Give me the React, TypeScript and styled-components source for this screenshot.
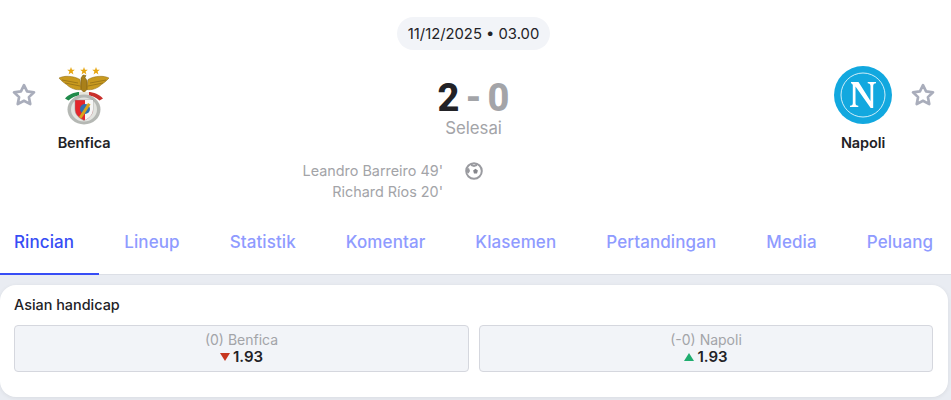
import styled, { createGlobalStyle } from 'styled-components';

const GlobalStyle = createGlobalStyle`
  html, body {
    margin: 0;
    padding: 0;
    background: #e9ecf2;
    font-family: Inter, "Liberation Sans", sans-serif;
  }
  * {
    box-sizing: border-box;
  }
`;

const Page = styled.div`
  width: 951px;
  height: 400px;
  overflow: hidden;
`;

const Header = styled.div`
  height: 215px;
  background: #fff;
  padding: 17px 4px 0 0;
`;

const DatePill = styled.div`
  width: 153px;
  height: 33px;
  margin: 0 auto;
  border-radius: 17px;
  background: #f2f4f8;
  color: #222226;
  font-size: 14.8px;
  display: flex;
  align-items: center;
  justify-content: center;
`;

const MatchRow = styled.div`
  display: grid;
  grid-template-columns: 130px 1fr 130px;
  margin-top: 15px;
  height: 95px;
`;

const TeamSide = styled.div<{ $flip?: boolean }>`
  display: flex;
  flex-direction: ${(p) => (p.$flip ? 'row-reverse' : 'row')};
  align-items: flex-start;
  padding: ${(p) => (p.$flip ? '0 8px 0 0' : '0 0 0 8px')};
`;

const FavStar = styled.svg`
  width: 32px;
  height: 32px;
  margin-top: 14px;
  flex: none;
  fill: none;
  stroke: #a9adbb;
  stroke-width: 2;
  stroke-linejoin: round;
`;

const Team = styled.div`
  width: 60px;
  margin: 0 14px;
  display: flex;
  flex-direction: column;
  align-items: center;
`;

const Crest = styled.svg`
  width: 60px;
  height: 60px;
  display: block;
  flex: none;
`;

const TeamName = styled.div`
  margin-top: 9px;
  font-size: 14.5px;
  line-height: 18px;
  font-weight: 600;
  color: #222226;
  letter-spacing: -0.1px;
`;

const Center = styled.div`
  display: flex;
  flex-direction: column;
  align-items: center;
  padding-top: 14px;
`;

const Score = styled.div`
  display: flex;
  align-items: center;
  gap: 6px;
  height: 38px;
  font-family: Roboto, Inter, sans-serif;
  font-size: 38px;
  font-weight: 800;
  line-height: 38px;
`;

const ScoreValue = styled.span<{ $muted?: boolean }>`
  color: ${(p) => (p.$muted ? '#a3a4a8' : '#222226')};
`;

const Status = styled.div`
  margin-top: 1px;
  font-size: 16.8px;
  line-height: 20px;
  color: #a3a4a8;
`;

const Scorers = styled.div`
  display: grid;
  grid-template-columns: 1fr 61px 1fr;
`;

const ScorerList = styled.div`
  text-align: right;
  white-space: nowrap;
  font-size: 14.4px;
  line-height: 21px;
  color: #a3a4a8;
`;

const BallIcon = styled.svg`
  width: 18px;
  height: 18px;
  margin: 1.5px auto 0;
  display: block;
`;

const Tabs = styled.div`
  height: 60px;
  background: #fff;
  border-bottom: 1px solid #dcdfe6;
  display: flex;
  align-items: stretch;
`;

const Tab = styled.div<{ $active?: boolean }>`
  flex: none;
  height: 60px;
  padding: 17px 25px 0;
  font-size: 17px;
  line-height: 20px;
  font-weight: 500;
  letter-spacing: 0.1px;
  white-space: nowrap;
  color: ${(p) => (p.$active ? '#374df5' : '#8f9bff')};
  border-bottom: 2px solid ${(p) => (p.$active ? '#374df5' : 'transparent')};

  &:first-child {
    padding-left: 14px;
  }
`;

const Body = styled.div`
  padding: 10px 3px 0 0;
`;

const Card = styled.div`
  height: 112px;
  background: #fff;
  border-radius: 16px;
  padding: 11px 14px 0;
  box-shadow: 0 1px 4px rgba(34, 34, 38, 0.08);
`;

const CardTitle = styled.div`
  font-size: 14.4px;
  line-height: 18px;
  font-weight: 500;
  color: #222226;
`;

const Odds = styled.div`
  display: grid;
  grid-template-columns: 455px 454px;
  gap: 10px;
  margin-top: 11px;
`;

const OddsBox = styled.div`
  height: 47px;
  border: 1px solid #d5d7de;
  border-radius: 4px;
  background: #f2f4f8;
  display: flex;
  flex-direction: column;
  align-items: center;
  padding-top: 5px;
`;

const OddsLabel = styled.div`
  font-size: 14px;
  line-height: 17px;
  color: #a3a4a8;
`;

const OddsValue = styled.div`
  display: flex;
  align-items: center;
  gap: 3px;
  font-size: 15px;
  line-height: 18px;
  font-weight: 600;
  color: #222226;
`;

const Arrow = styled.span<{ $up?: boolean }>`
  width: 0;
  height: 0;
  border-left: 5px solid transparent;
  border-right: 5px solid transparent;
  border-top: ${(p) => (p.$up ? 'none' : '8px solid #c7361f')};
  border-bottom: ${(p) => (p.$up ? '8px solid #1fad6f' : 'none')};
`;

const tabs = ['Rincian', 'Lineup', 'Statistik', 'Komentar', 'Klasemen', 'Pertandingan', 'Media', 'Peluang'];

const starPath = 'M12 4.6l2.3 4.7 5.2.7-3.8 3.6 1 5.2-4.7-2.5-4.7 2.5 1-5.2L4.500 10l5.2-.7z';
const crestStar = 'M0-4l1 2.7 2.8.1-2.2 1.8.8 2.8L0 1.8-2.4 3.400l.8-2.8-2.2-1.8 2.8-.1z';
const wingPath = 'M5 13c5-2.5 14-2.5 21 1.5l1.5 10c-5 1-11-1-15-5-3-2-5.5-4-7.5-6.5z';

function Star() {
  return (
    <FavStar viewBox="0 0 24 24">
      <path d={starPath} />
    </FavStar>
  );
}

function BenficaCrest() {
  return (
    <Crest viewBox="0 0 60 60">
      <g fill="#e8a712">
        <path d={crestStar} transform="translate(17 6)" />
        <path d={crestStar} transform="translate(30 6)" />
        <path d={crestStar} transform="translate(42 6)" />
      </g>
      <path d={wingPath} fill="#c99a1f" stroke="#8d6a16" strokeWidth=".5" />
      <path d={wingPath} fill="#c99a1f" stroke="#8d6a16" strokeWidth=".5" transform="matrix(-1 0 0 1 60 0)" />
      <path d="M8 15l16 3M11 18l15 3" stroke="#8d6a16" strokeWidth=".7" fill="none" />
      <path d="M52 15l-16 3M49 18l-15 3" stroke="#8d6a16" strokeWidth=".7" fill="none" />
      <path d="M27 13l2-3 3 .5-1 2 2 3v9l-3 3-3-3v-9z" fill="#a9801a" stroke="#6f5210" strokeWidth=".5" />
      <path d="M11 33.500c4-4.500 10-7 17-6.500l2 3.500c-7-.5-12 1.500-15.500 5z" fill="#1f8a4a" />
      <path d="M49 33.500c-4-4.500-10-7-17-6.500l-2 3.500c7-.5 12 1.500 15.500 5z" fill="#c9302c" />
      <path d="M25 27h10v3h-10z" fill="#e9e6dc" />
      <ellipse cx="30" cy="44.500" rx="16.500" ry="15" fill="#b5b8b4" />
      <ellipse cx="30" cy="44.500" rx="13" ry="12" fill="#e3e4e0" />
      <path d="M21 35h18v9c0 6-4 9-9 11.500-5-2.500-9-5.500-9-11.500z" fill="#e4262b" stroke="#8f8f8f" strokeWidth=".5" />
      <path d="M31 35h8v9c0 6-4 9-8 11z" fill="#f6f6f6" />
      <circle cx="31" cy="44" r="5" fill="#2f6fb0" />
      <path d="M25 52l9-14 2.500 1.500-9 14z" fill="#d7a51c" />
    </Crest>
  );
}

function NapoliCrest() {
  return (
    <Crest viewBox="0 0 60 60">
      <circle cx="30" cy="30" r="29" fill="#12a8df" />
      <circle cx="30" cy="30" r="22" fill="none" stroke="#fff" strokeWidth=".8" />
      <path
        d="M18 17h7.500l12 19V21c0-1.800-.8-2.500-2.800-2.800V17H43v1.200c-2 .3-2.800 1-2.800 2.800V43h-2.500L22.500 21.500V38c0 1.800.8 2.500 2.800 2.800V42H17v-1.200c2-.3 2.800-1 2.800-2.800V20c-.3-1-.8-1.500-1.800-1.800z"
        fill="#fff"
      />
    </Crest>
  );
}

function Ball() {
  return (
    <BallIcon viewBox="0 0 18 18">
      <circle cx="9" cy="9" r="7.800" fill="#fff" stroke="#9a9ba0" strokeWidth="2" />
      <path d="M10.500 6.800l2.400 1.800-.9 2.900H9l-.9-2.900z" fill="#85868b" />
      <path d="M6 1.500l3 1.500 3-1.500v2.500L9 5 6 4zM1.500 7l2.500-1 1 3-1.500 2.500-2-1.500z" fill="#9a9ba0" />
    </BallIcon>
  );
}

export default function App() {
  return (
    <Page>
      <GlobalStyle />
      <Header>
        <DatePill>11/12/2025 • 03.00</DatePill>
        <MatchRow>
          <TeamSide>
            <Star />
            <Team>
              <BenficaCrest />
              <TeamName>Benfica</TeamName>
            </Team>
          </TeamSide>
          <Center>
            <Score>
              <ScoreValue>2</ScoreValue>
              <ScoreValue $muted>-</ScoreValue>
              <ScoreValue $muted>0</ScoreValue>
            </Score>
            <Status>Selesai</Status>
          </Center>
          <TeamSide $flip>
            <Star />
            <Team>
              <NapoliCrest />
              <TeamName>Napoli</TeamName>
            </Team>
          </TeamSide>
        </MatchRow>
        <Scorers>
          <ScorerList>
            <div>Leandro Barreiro 49'</div>
            <div>Richard Ríos 20'</div>
          </ScorerList>
          <Ball />
        </Scorers>
      </Header>
      <Tabs>
        {tabs.map((tab, i) => (
          <Tab key={tab} $active={i === 0}>
            {tab}
          </Tab>
        ))}
      </Tabs>
      <Body>
        <Card>
          <CardTitle>Asian handicap</CardTitle>
          <Odds>
            <OddsBox>
              <OddsLabel>(0) Benfica</OddsLabel>
              <OddsValue>
                <Arrow />
                1.93
              </OddsValue>
            </OddsBox>
            <OddsBox>
              <OddsLabel>(-0) Napoli</OddsLabel>
              <OddsValue>
                <Arrow $up />
                1.93
              </OddsValue>
            </OddsBox>
          </Odds>
        </Card>
      </Body>
    </Page>
  );
}
